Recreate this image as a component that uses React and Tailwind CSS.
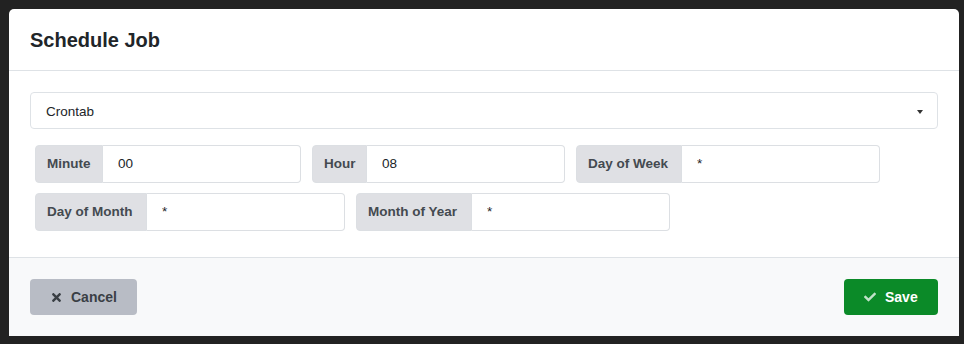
import React from 'react';
import { FaTimes, FaCheck } from 'react-icons/fa';

const fields = [
  { label: 'Minute', value: '00', width: 'w-[68px]' },
  { label: 'Hour', value: '08', width: 'w-[55px]' },
  { label: 'Day of Week', value: '*', width: 'w-[106px]' },
  { label: 'Day of Month', value: '*', width: 'w-[112px]' },
  { label: 'Month of Year', value: '*', width: 'w-[116px]' },
];

function CronField({ label, value, width }) {
  return (
    <div className="flex h-[38px]">
      <span className={`${width} shrink-0 flex items-center pl-[11px] bg-[#dfe0e4] border border-[#dcdfe3] rounded-l-[4px] text-[13.5px] font-bold text-[#444a50] whitespace-nowrap`}>
        {label}
      </span>
      <input
        type="text"
        defaultValue={value}
        className="w-[198px] px-[15px] border border-l-0 border-[#dcdfe3] rounded-r-[4px] bg-white text-[13.5px] text-[#212529] outline-none"
      />
    </div>
  );
}

export default function App() {
  return (
    <div className="w-[964px] h-[344px] bg-[#222222] pt-[9px] pl-[9px]" style={{ fontFamily: '"Liberation Sans", Arial, sans-serif' }}>
      <div className="w-[950px] h-[327px] bg-white rounded-tl-[5px] rounded-tr-[5px] flex flex-col overflow-hidden">
        <div className="h-[62px] flex items-center px-[21px] border-b border-[#dee2e6]">
          <h3 className="text-[20px] font-bold text-[#212529]">Schedule Job</h3>
        </div>

        <div className="px-[21px] pt-[21px] pb-[26px]">
          <div className="relative h-[37px] mb-[16px]">
            <select className="appearance-none w-full h-full pl-[15px] pt-[4px] pr-8 border border-[#dee2e6] rounded-[4px] bg-white text-[13.5px] text-[#212529] outline-none">
              <option>Crontab</option>
            </select>
            <span className="absolute right-[15px] top-[18px] w-0 h-0 border-l-[3.5px] border-r-[3.5px] border-t-[4px] border-l-transparent border-r-transparent border-t-[#333]" />
          </div>

          <div className="flex flex-wrap gap-x-[11px] gap-y-[10px] pl-[5px] pr-[5px]">
            {fields.map((f) => (
              <CronField key={f.label} label={f.label} value={f.value} width={f.width} />
            ))}
          </div>
        </div>

        <div className="flex-1 bg-[#f8f9fa] border-t border-[#dee2e6] px-[21px] flex items-center justify-between">
          <button className="w-[107px] h-[36px] pl-[21px] rounded-[4px] bg-[#b8bcc5] text-[#3a3f45] text-[14px] font-bold inline-flex items-center gap-[9px]">
            <FaTimes className="w-[11px] h-[13px]" />
            Cancel
          </button>
          <button className="w-[94px] h-[36px] pl-[19px] rounded-[4px] bg-[#0b8a28] text-white text-[14px] font-bold inline-flex items-center gap-[8px]">
            <FaCheck className="w-[14px] h-[12px] text-white/75" />
            Save
          </button>
        </div>
      </div>
    </div>
  );
}
